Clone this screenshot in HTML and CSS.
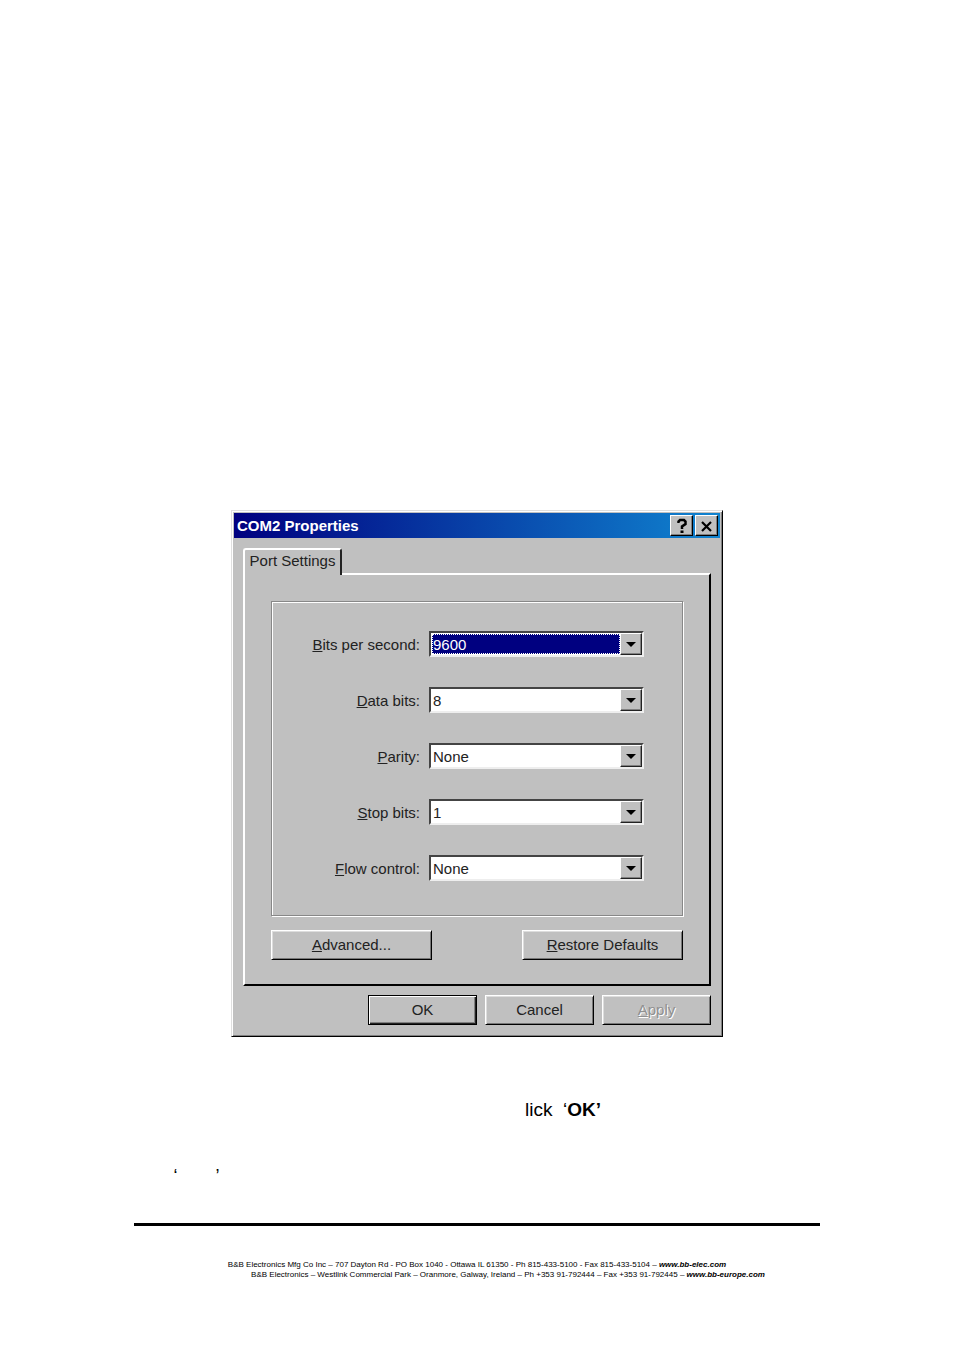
FILE: index.html
```
<!doctype html>
<html lang="en">

<head>
    <meta charset="UTF-8">
    <meta name="viewport" content="width=device-width, initial-scale=1.0">
    <title>COM2 Properties</title>
    <link rel="stylesheet" href="styles.css">
</head>

<body>
    <main class="sheet">
        <form class="dialog">
            <div class="titlebar">
                <h1>COM2 Properties</h1>
                <button type="button" class="cap" aria-label="Help">
                    <svg width="18" height="16" viewBox="0 0 18 16"><path d="M5.5 5V3.5L7 2h4l1.500 1.500V6L9 8.500V11" fill="none" stroke="#000" stroke-width="2.500"/><path d="M7.500 12.500h3V15h-3z"/></svg>
                </button>
                <button type="button" class="cap" aria-label="Close">
                    <svg width="18" height="16" viewBox="0 0 18 16"><path d="M4 4l9 9M13 4l-9 9" stroke="#000" stroke-width="2.200"/></svg>
                </button>
            </div>

            <div class="content">
                <button type="button" class="tab">Port Settings</button>
                <section class="panel">
                    <div class="group">
                        <div class="row">
                            <label for="bits"><u>B</u>its per second:</label>
                            <div class="combo active">
                                <select id="bits"><option>9600</option></select>
                                <span class="arrow"></span>
                            </div>
                        </div>
                        <div class="row">
                            <label for="data"><u>D</u>ata bits:</label>
                            <div class="combo">
                                <select id="data"><option>8</option></select>
                                <span class="arrow"></span>
                            </div>
                        </div>
                        <div class="row">
                            <label for="parity"><u>P</u>arity:</label>
                            <div class="combo">
                                <select id="parity"><option>None</option></select>
                                <span class="arrow"></span>
                            </div>
                        </div>
                        <div class="row">
                            <label for="stop"><u>S</u>top bits:</label>
                            <div class="combo">
                                <select id="stop"><option>1</option></select>
                                <span class="arrow"></span>
                            </div>
                        </div>
                        <div class="row">
                            <label for="flow"><u>F</u>low control:</label>
                            <div class="combo">
                                <select id="flow"><option>None</option></select>
                                <span class="arrow"></span>
                            </div>
                        </div>
                    </div>
                    <div class="tools">
                        <button type="button" class="btn wide"><u>A</u>dvanced...</button>
                        <button type="button" class="btn wide"><u>R</u>estore Defaults</button>
                    </div>
                </section>
                <div class="actions">
                    <button type="button" class="btn default">OK</button>
                    <button type="button" class="btn">Cancel</button>
                    <button type="button" class="btn" disabled><u>A</u>pply</button>
                </div>
            </div>
        </form>

        <p class="step">lick&nbsp; ‘<b>OK’</b></p>
        <p class="quotes"><span>‘</span><span>’</span></p>

        <footer>
            <p>B&amp;B Electronics Mfg Co Inc – 707 Dayton Rd - PO Box 1040 - Ottawa IL 61350 - Ph 815-433-5100 - Fax 815-433-5104 – <a href="#">www.bb-elec.com</a></p>
            <p class="europe">B&amp;B Electronics – Westlink Commercial Park – Oranmore, Galway, Ireland – Ph +353 91-792444 – Fax +353 91-792445 – <a href="#">www.bb-europe.com</a></p>
        </footer>
    </main>
</body>

</html>
```
FILE: styles.css
```
* {
    margin: 0;
    padding: 0;
    box-sizing: border-box;
}

body {
    background: #fff;
    color: #000;
    font-family: "Liberation Sans", Arial, sans-serif;
}

.sheet {
    padding: 510px 14% 70px;
}

/* dialog window */
.dialog {
    max-width: 492px;
    margin: 0 auto;
    padding: 1px;
    background: #c0c0c0;
    border: 1px solid;
    border-color: #dfdfdf #000 #000 #dfdfdf;
    box-shadow: inset 1px 1px #fff, inset -1px -1px #808080;
    font-size: 15px;
    color: #222;
}

.titlebar {
    display: flex;
    align-items: center;
    height: 25px;
    margin: 1px;
    padding: 0 2px 0 3px;
    background: linear-gradient(to right, #000080, #1084d0);
}

.titlebar h1 {
    flex: 1;
    font-size: 15px;
    color: #fff;
}

.cap {
    width: 23px;
    height: 21px;
    margin-left: 2px;
    background: #c0c0c0;
    border: 1px solid;
    border-color: #fff #000 #000 #fff;
    box-shadow: inset -1px -1px #808080;
}

.cap svg {
    display: block;
    margin: 0 auto;
}

.content {
    padding: 9px 10px 10px;
}

.tab {
    display: block;
    position: relative;
    height: 27px;
    width: 99px;
    margin-bottom: -2px;
    padding-bottom: 4px;
    background: #c0c0c0;
    border: 2px solid;
    border-color: #fff #222 #c0c0c0 #fff;
    border-bottom: 0;
    border-radius: 3px 3px 0 0;
    font: inherit;
    color: inherit;
}

.panel {
    padding: 26px 26px 24px;
    border: 2px solid;
    border-color: #fff #000 #000 #fff;
}

.group {
    display: flex;
    flex-direction: column;
    gap: 30px;
    padding: 29px 38px 34px;
    border: 1px solid #888;
    box-shadow: inset 1px 1px #fff, 1px 1px #fff;
}

.row {
    display: flex;
    justify-content: flex-end;
    align-items: center;
    gap: 9px;
}

.combo {
    position: relative;
    width: 215px;
    height: 26px;
    padding: 1px;
    background: #fff;
    border: 2px solid;
    border-color: #444 #eee #eee #444;
}

.combo select {
    display: block;
    width: 188px;
    height: 20px;
    padding-left: 1px;
    appearance: none;
    background: #fff;
    border: 0;
    border-radius: 0;
    font: inherit;
    color: inherit;
}

.active select {
    background: #000080;
    outline: 1px dotted #fff;
    outline-offset: -1px;
    color: #fff;
}

.arrow {
    position: absolute;
    top: 0;
    right: 0;
    width: 22px;
    height: 22px;
    background: #c0c0c0;
    border: 1px solid;
    border-color: #fff #222 #222 #fff;
    box-shadow: inset -1px -1px #808080;
    pointer-events: none;
}

.arrow::after {
    content: "";
    position: absolute;
    top: 8px;
    left: 5px;
    border: 5px solid transparent;
    border-top-color: #000;
    border-bottom: 0;
}

.tools {
    display: flex;
    justify-content: space-between;
    margin-top: 14px;
}

.btn {
    width: 109px;
    height: 30px;
    padding-bottom: 2px;
    background: #c0c0c0;
    border: 1px solid;
    border-color: #fff #000 #000 #fff;
    box-shadow: inset 1px 1px #ddd, inset -1px -1px #777;
    font: inherit;
    color: inherit;
}

.wide {
    width: 161px;
}

.default {
    border-color: #000;
    box-shadow: inset 1px 1px #fff, inset -1px -1px #222, inset -2px -2px #808080;
}

.btn:disabled {
    color: #909090;
    text-shadow: 1px 1px #fff;
}

.actions {
    display: flex;
    justify-content: flex-end;
    gap: 8px;
    margin-top: 9px;
}

/* text under the dialog */
.step {
    margin-top: 62px;
    padding-left: 57%;
    font-size: 19px;
    line-height: 22px;
}

.quotes {
    display: flex;
    gap: 38px;
    margin-top: 45px;
    padding-left: 40px;
    font-size: 18px;
    line-height: 20px;
}

footer {
    margin-top: 37px;
    padding-top: 34px;
    border-top: 3px solid #000;
    font-size: 8px;
    line-height: 10px;
    text-align: center;
    white-space: nowrap;
}

footer .europe {
    padding-left: 62px;
}

footer a {
    color: #000;
    font-style: italic;
    font-weight: bold;
    text-decoration: none;
}
```
